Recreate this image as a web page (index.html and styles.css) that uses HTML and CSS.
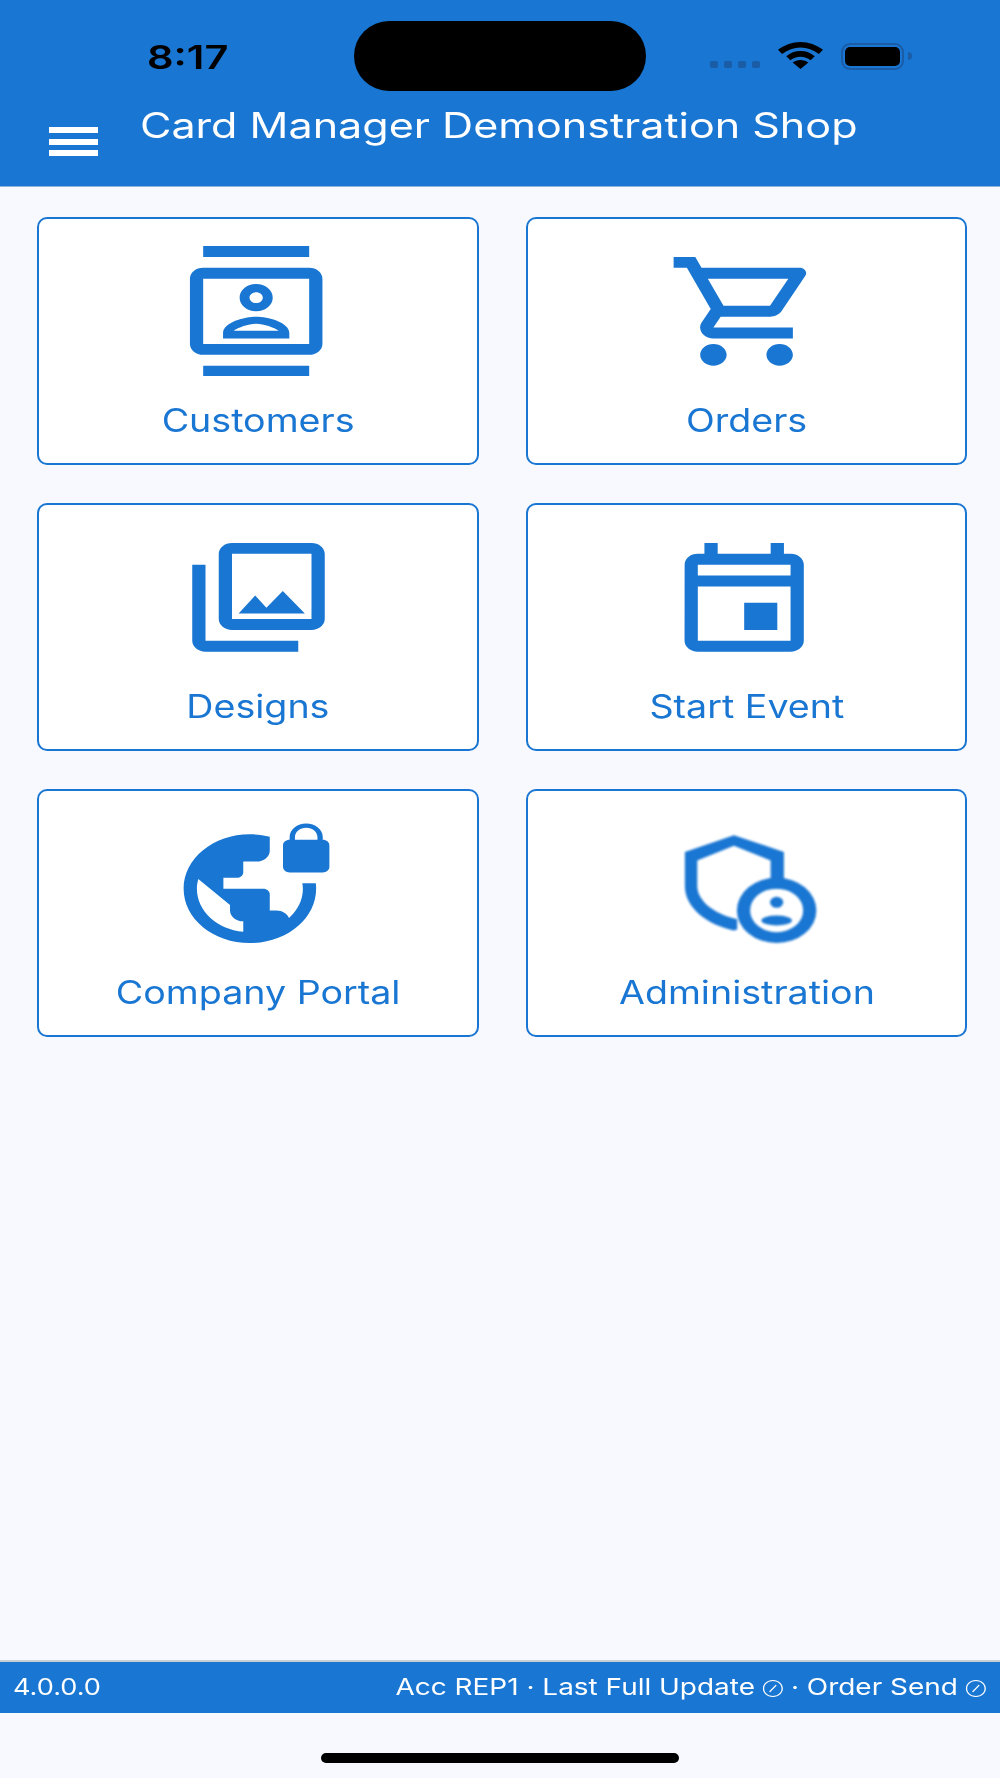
FILE: index.html
```html
<!DOCTYPE html>
<html>
<head>
	<meta charset="UTF-8">
	<title>Card Manager Demonstration Shop</title>
	<link rel="stylesheet" href="styles.css">
</head>
<body>
	<header class="topbar">
		<div class="status">
			<span class="time">8:17</span>
			<div class="notch"></div>
			<div class="dots"><i></i><i></i><i></i><i></i></div>
			<svg class="wifi" viewBox="0 0 24 16" preserveAspectRatio="none">
				<path d="M12 0C7.6 0 3.6 1.7 0 4.6l2.2 2.5C5.2 4.6 8.4 3.2 12 3.2s6.8 1.4 9.8 3.9L24 4.6C20.4 1.7 16.4 0 12 0z"/>
				<path d="M12 5.4c-2.9 0-5.4 1.1-7.6 3l2.2 2.4c1.6-1.3 3.3-2.1 5.4-2.1s3.8.8 5.4 2.1l2.2-2.4c-2.2-1.9-4.7-3-7.6-3z"/>
				<path d="M12 10.6c-1.6 0-3 .6-4.2 1.6L12 16l4.2-3.8c-1.2-1-2.6-1.6-4.2-1.6z"/>
			</svg>
			<div class="battery"><div class="charge"></div></div>
			<div class="nub"></div>
		</div>
		<div class="titlerow">
			<div class="menu"><i></i><i></i><i></i></div>
			<h1 class="title">Card Manager Demonstration Shop</h1>
		</div>
	</header>

	<main class="tiles">
		<div class="tile">
			<svg class="icon" viewBox="0.35 0 24 24" preserveAspectRatio="none">
				<path d="M20 0H4v2h16V0zM4 24h16v-2H4v2zM20 4H4c-1.1 0-2 .9-2 2v12c0 1.1.9 2 2 2h16c1.1 0 2-.9 2-2V6c0-1.1-.9-2-2-2zm0 14H4V6h16v12z"/>
				<path d="M12 12c1.38 0 2.5-1.12 2.5-2.5S13.38 7 12 7 9.5 8.12 9.5 9.5 10.62 12 12 12zm0-3.5c.55 0 1 .45 1 1s-.45 1-1 1-1-.45-1-1 .45-1 1-1z"/>
				<path fill-rule="evenodd" d="M7 17v-1c0-2 3.3-3 5-3s5 1 5 3v1H7zm1.6-1.4h6.8c-.7-.6-2.2-1.3-3.4-1.3s-2.7.7-3.4 1.3z"/>
			</svg>
			<span class="label">Customers</span>
		</div>
		<div class="tile">
			<svg class="icon" viewBox="0 0 24 24" preserveAspectRatio="none">
				<path d="M15.55 13c.75 0 1.41-.41 1.75-1.03l3.58-6.49c.37-.66-.11-1.48-.87-1.48H5.21l-.94-2H1v2h2l3.6 7.59-1.35 2.44C4.52 15.37 5.48 17 7 17h12v-2H7l1.1-2h7.45zM6.16 6h12.15l-2.76 5H8.53L6.16 6zM7 18c-1.1 0-1.99.9-1.99 2S5.9 22 7 22s2-.9 2-2-.9-2-2-2zm10 0c-1.1 0-1.99.9-1.99 2s.89 2 1.99 2 2-.9 2-2-.9-2-2-2z"/>
			</svg>
			<span class="label">Orders</span>
		</div>
		<div class="tile">
			<svg class="icon" viewBox="0 0 24 24" preserveAspectRatio="none">
				<path d="M20 4v12H8V4h12m0-2H8c-1.1 0-2 .9-2 2v12c0 1.1.9 2 2 2h12c1.1 0 2-.9 2-2V4c0-1.1-.9-2-2-2zm-8.5 9.67l1.69 2.26 2.48-3.1L19 15H9zM2 6v14c0 1.1.9 2 2 2h14v-2H4V6H2z"/>
			</svg>
			<span class="label">Designs</span>
		</div>
		<div class="tile">
			<svg class="icon" viewBox="0.35 0 24 24" preserveAspectRatio="none">
				<path d="M19 4h-1V2h-2v2H8V2H6v2H5c-1.11 0-1.99.9-1.99 2L3 20c0 1.1.89 2 2 2h14c1.1 0 2-.9 2-2V6c0-1.1-.9-2-2-2zm0 16H5V10h14v10zm0-12H5V6h14v2zm-2 5h-5v5h5v-5z"/>
			</svg>
			<span class="label">Start Event</span>
		</div>
		<div class="tile">
			<svg class="icon" viewBox="0.3 0 24 24" preserveAspectRatio="none">
				<path d="M22 4v-.5C22 2.12 20.88 1 19.5 1S17 2.12 17 3.5V4c-.55 0-1 .45-1 1v4c0 .55.45 1 1 1h5c.55 0 1-.45 1-1V5c0-.55-.45-1-1-1zm-.8 0h-3.4v-.5c0-.94.76-1.7 1.7-1.7s1.7.76 1.7 1.7V4z"/>
				<path d="M18.92 12c.04.33.08.66.08 1 0 2.08-.8 3.97-2.1 5.39-.26-.81-1-1.39-1.9-1.39h-1v-3c0-.55-.45-1-1-1H7v-2h2c.55 0 1-.45 1-1V8h2c1.1 0 2-.9 2-2V3.46c-.95-.3-1.95-.46-3-.46C5.48 3 1 7.48 1 13s4.48 10 10 10 10-4.48 10-10c0-.34-.02-.67-.05-1h-2.03zM10 20.93c-3.95-.49-7-3.85-7-7.93 0-.62.08-1.21.21-1.79L8 16v1c0 1.1.9 2 2 2v1.93z"/>
			</svg>
			<span class="label">Company Portal</span>
		</div>
		<div class="tile">
			<svg class="icon soft" viewBox="0 0 24 24" preserveAspectRatio="none">
				<path d="M10.1 3.16 17.65 6.25V13H15.64V7.8L10.1 5.1 4.57 7.8V12.5C4.57 15 6.8 17.6 10.6 18.6V20.5L10.1 20.7C6 19.6 2.7 16.5 2.7 12.5V6.25Z"/>
				<path fill-rule="evenodd" d="M16.55 11a6 6 0 1 0 0 12 6 6 0 1 0 0-12zm0 2a4 4 0 1 1 0 8 4 4 0 1 1 0-8z"/>
				<circle cx="16.55" cy="15.5" r="1"/>
				<ellipse cx="16.55" cy="18.85" rx="2.3" ry="0.9"/>
			</svg>
			<span class="label">Administration</span>
		</div>
	</main>

	<footer class="infobar">
		<span class="version">4.0.0.0</span>
		<span class="sync">Acc REP1 · Last Full Update <span class="off">⊘</span> · Order Send <span class="off">⊘</span></span>
	</footer>
	<div class="homearea"><div class="homebar"></div></div>
</body>
</html>
```

FILE: styles.css
```css
* {
	box-sizing: border-box;
}

body {
	margin: 0;
	height: 1778px;
	display: flex;
	flex-direction: column;
	background: #f8f9ff;
	font-family: Inter, "Liberation Sans", sans-serif;
}

/* top bar */
.topbar {
	height: 187px;
	background: #1976d2;
	border-bottom: 1px solid #8fb4dc;
}

.status {
	display: flex;
	align-items: flex-start;
	height: 91px;
	padding: 21px 0 0 147px;
}

.time {
	width: 207px;
	margin-top: 16px;
	font-size: 33px;
	line-height: 40px;
	font-weight: 600;
	color: #000;
	transform: scaleX(1.26);
	transform-origin: left;
}

.notch {
	width: 292px;
	height: 70px;
	border-radius: 35px / 35px;
	background: #000;
}

.dots {
	display: flex;
	gap: 6px;
	margin: 40px 0 0 64px;
}

.dots i {
	width: 8px;
	height: 7px;
	border-radius: 2px;
	background: #1a5ca6;
}

.wifi {
	width: 45px;
	height: 27px;
	margin: 21px 0 0 18px;
	fill: #000;
}

.battery {
	width: 63px;
	height: 27px;
	margin: 22px 0 0 18px;
	padding: 2px;
	border: 2px solid #1a5ca6;
	border-radius: 9px;
}

.charge {
	height: 100%;
	border-radius: 5px;
	background: #000;
}

.nub {
	width: 4px;
	height: 8px;
	margin: 31px 0 0 4px;
	border-radius: 0 4px 4px 0;
	background: #1a5ca6;
}

.titlerow {
	display: flex;
	align-items: flex-start;
	padding-left: 49px;
}

.menu {
	display: flex;
	flex-direction: column;
	gap: 5.5px;
	width: 49px;
	margin-top: 36px;
}

.menu i {
	height: 6px;
	background: #fff;
}

.title {
	margin: 12px 0 0 42px;
	font-size: 35px;
	line-height: 44px;
	font-weight: 400;
	color: #fff;
	white-space: nowrap;
	transform: scaleX(1.23);
	transform-origin: left;
}

/* tiles */
.tiles {
	flex: 1;
	display: grid;
	grid-template-columns: 442px 441px;
	grid-auto-rows: 248px;
	column-gap: 47px;
	row-gap: 38px;
	align-content: start;
	padding: 30px 0 0 37px;
}

.tile {
	display: flex;
	flex-direction: column;
	align-items: center;
	padding-top: 26.5px;
	border: 2px solid #1976d2;
	border-radius: 10px;
	background: #fff;
}

.icon {
	width: 159px;
	height: 130.5px;
	fill: #1976d2;
}

.soft {
	filter: blur(0.8px);
}

.label {
	margin-top: 25px;
	font-size: 32px;
	line-height: 40px;
	color: #1976d2;
	white-space: nowrap;
	transform: scaleX(1.175);
}

/* bottom bar */
.infobar {
	display: flex;
	justify-content: space-between;
	height: 53px;
	padding: 0 14px 0 13px;
	border-top: 2px solid #c9cdd4;
	background: #1976d2;
	font-size: 23px;
	line-height: 50px;
	color: #fff;
	white-space: nowrap;
}

.version {
	transform: scaleX(1.18);
	transform-origin: left;
}

.sync {
	transform: scaleX(1.215);
	transform-origin: right;
}

.off {
	font-size: 12px;
	vertical-align: 2px;
}

.homearea {
	height: 65px;
	padding-top: 40px;
}

.homebar {
	width: 358px;
	height: 10px;
	margin: 0 auto;
	border-radius: 5px;
	background: #000;
}
```
